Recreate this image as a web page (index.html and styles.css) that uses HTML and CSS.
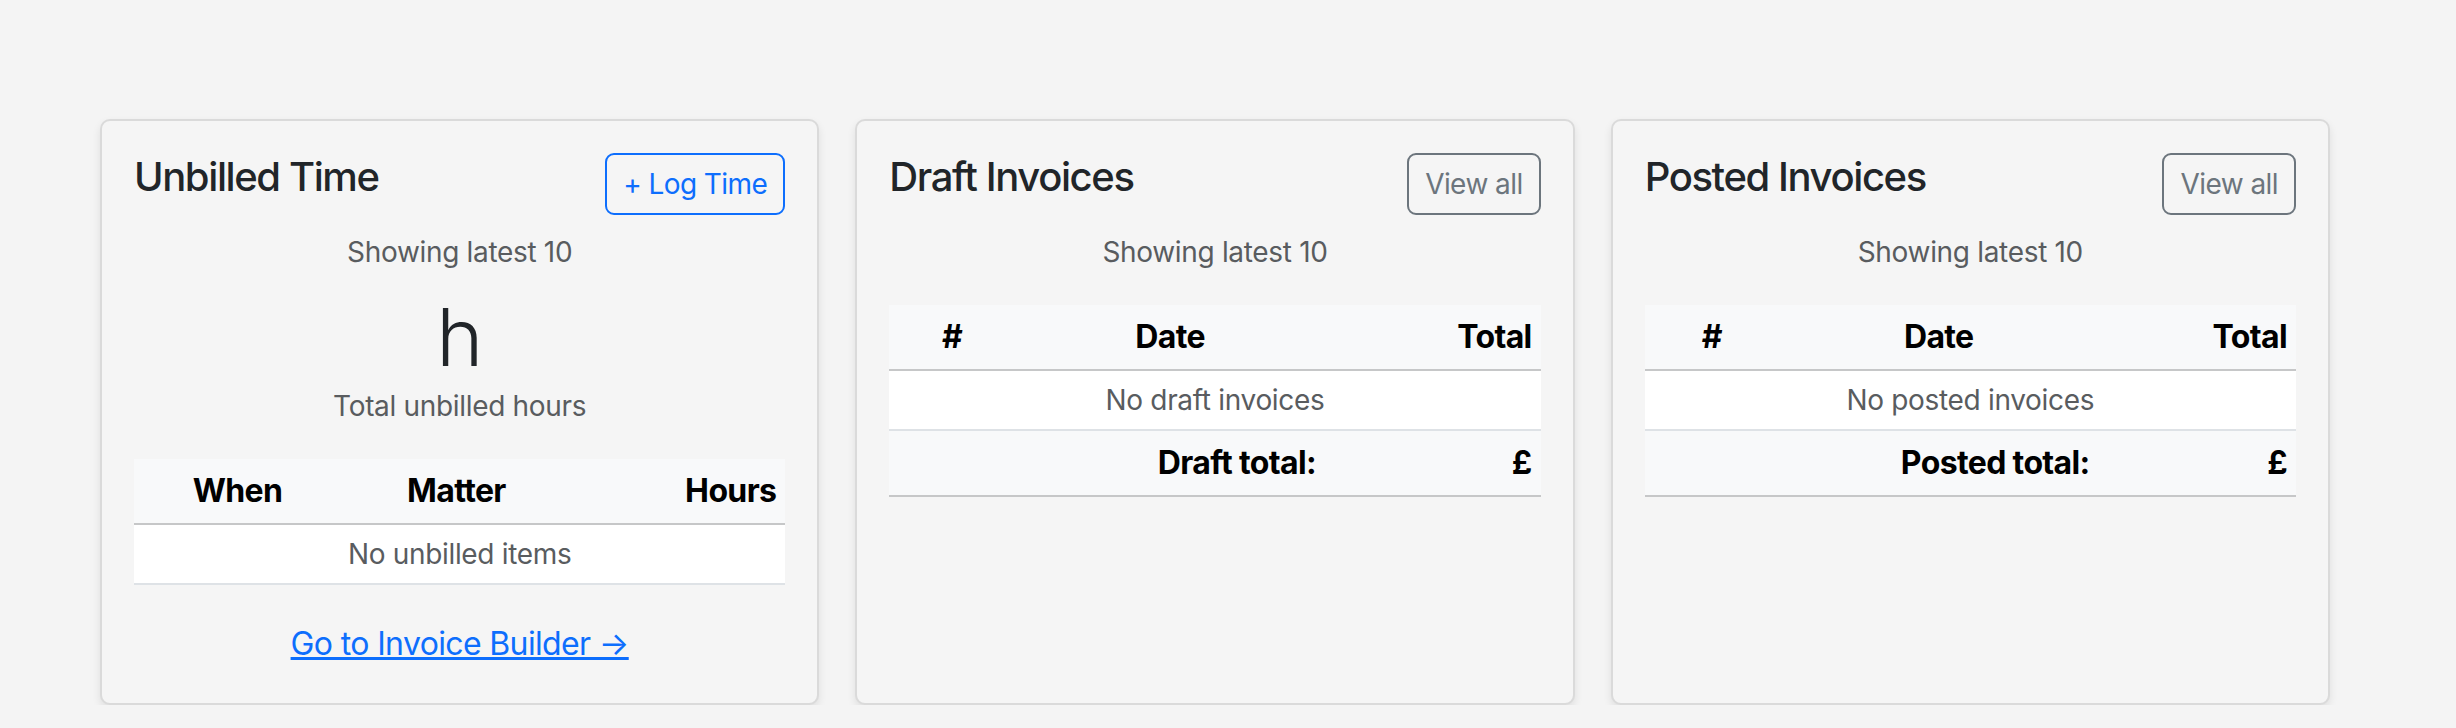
FILE: index.html
```html
<!DOCTYPE html>
<html lang="en">
<head>
<meta charset="utf-8">
<title>Dashboard</title>
<link rel="stylesheet" href="styles.css">
</head>
<body>
<main class="page">
  <section class="card">
    <div class="card-head">
      <h5 class="card-title">Unbilled Time</h5>
      <a class="btn btn-primary-outline">+ Log Time</a>
    </div>
    <p class="muted sub sub-tight">Showing latest 10</p>
    <div class="stat">h</div>
    <p class="muted stat-label">Total unbilled hours</p>
    <table class="tbl cols-time">
      <colgroup><col><col><col></colgroup>
      <thead>
        <tr><th class="c">When</th><th class="c">Matter</th><th class="r">Hours</th></tr>
      </thead>
      <tbody>
        <tr><td colspan="3" class="empty">No unbilled items</td></tr>
      </tbody>
    </table>
    <div class="link-row"><a class="link" href="#">Go to Invoice Builder →</a></div>
  </section>

  <section class="card">
    <div class="card-head">
      <h5 class="card-title">Draft Invoices</h5>
      <a class="btn btn-secondary-outline">View all</a>
    </div>
    <p class="muted sub">Showing latest 10</p>
    <table class="tbl cols-draft">
      <colgroup><col><col><col></colgroup>
      <thead>
        <tr><th class="c">#</th><th class="c">Date</th><th class="r">Total</th></tr>
      </thead>
      <tbody>
        <tr><td colspan="3" class="empty">No draft invoices</td></tr>
      </tbody>
      <tfoot>
        <tr><td colspan="2" class="r">Draft total:</td><td class="r">£</td></tr>
      </tfoot>
    </table>
  </section>

  <section class="card">
    <div class="card-head">
      <h5 class="card-title">Posted Invoices</h5>
      <a class="btn btn-secondary-outline">View all</a>
    </div>
    <p class="muted sub">Showing latest 10</p>
    <table class="tbl cols-posted">
      <colgroup><col><col><col></colgroup>
      <thead>
        <tr><th class="c">#</th><th class="c">Date</th><th class="r">Total</th></tr>
      </thead>
      <tbody>
        <tr><td colspan="3" class="empty">No posted invoices</td></tr>
      </tbody>
      <tfoot>
        <tr><td colspan="2" class="r">Posted total:</td><td class="r">£</td></tr>
      </tfoot>
    </table>
  </section>
</main>
</body>
</html>
```

FILE: styles.css
```css
* { box-sizing: border-box; }

html, body {
  margin: 0;
  background: #f4f4f4;
}

body {
  font-family: Inter, "Noto Sans", "Liberation Sans", sans-serif;
  color: #212529;
  font-size: 32px;
  line-height: 1.5;
  letter-spacing: -0.01em;
}

.page {
  display: flex;
  align-items: stretch;
  gap: 36px;
  padding: 119px 0 0 100px;
  width: 2330px;
}

.card {
  flex: 1 1 0;
  min-width: 0;
  background: #f5f5f5;
  border: 2px solid rgba(0, 0, 0, 0.11);
  border-radius: 10px;
  box-shadow: 0 4px 8px rgba(0, 0, 0, 0.09);
  padding: 32px 32px 35px;
}

.card-head {
  display: flex;
  justify-content: space-between;
  align-items: flex-start;
  margin-bottom: 16px;
}

.card-title {
  margin: 0;
  font-size: 40px;
  line-height: 1.2;
  font-weight: 500;
  letter-spacing: -0.035em;
  color: #212529;
}

.btn {
  display: inline-block;
  font-size: 28px;
  line-height: 1.5;
  padding: 8px 16px;
  border: 2px solid;
  border-radius: 9px;
  background: transparent;
  letter-spacing: -0.02em;
  cursor: pointer;
}

.btn-primary-outline {
  color: #0d6efd;
  border-color: #0d6efd;
}

.btn-secondary-outline {
  color: #6c757d;
  border-color: #6c757d;
}

.muted {
  color: #595c5f;
  font-size: 28px;
  line-height: 1.5;
  text-align: center;
  margin: 0;
}

.sub { margin-bottom: 32px; }
.sub-tight { margin-bottom: 16px; }

.stat {
  text-align: center;
  font-size: 80px;
  font-weight: 300;
  line-height: 1.2;
  color: #212529;
}

.stat-label { margin-bottom: 32px; }

.tbl {
  width: 100%;
  border-collapse: collapse;
  table-layout: fixed;
  margin-bottom: 35px;
}

.tbl th,
.tbl td {
  padding: 8px 9px;
  font-size: 32px;
  line-height: 1.5;
}

.tbl thead th {
  background: #f8f9fa;
  color: #000;
  font-weight: 700;
  letter-spacing: -0.02em;
  border-bottom: 2px solid #c6c7c8;
}

.tbl tbody td {
  background: #fff;
  border-bottom: 2px solid #dee2e6;
}

.tbl tfoot td {
  background: #f8f9fa;
  color: #000;
  font-weight: 700;
  letter-spacing: -0.02em;
  border-bottom: 2px solid #c6c7c8;
}

.tbl .empty {
  text-align: center;
  font-size: 28px;
  color: #595c5f;
}

.c { text-align: center; }
.r { text-align: right; }

.cols-time col:nth-child(1) { width: 31.8%; }
.cols-time col:nth-child(2) { width: 35.4%; }
.cols-time col:nth-child(3) { width: 32.8%; }

.cols-draft col:nth-child(1) { width: 19.3%; }
.cols-draft col:nth-child(2) { width: 47.6%; }
.cols-draft col:nth-child(3) { width: 33.1%; }

.cols-posted col:nth-child(1) { width: 20.6%; }
.cols-posted col:nth-child(2) { width: 49.1%; }
.cols-posted col:nth-child(3) { width: 30.3%; }

.link-row {
  text-align: center;
}

.link {
  color: #0d6efd;
  text-decoration: underline;
  font-size: 32px;
  line-height: 1.5;
  letter-spacing: -0.02em;
}
```
